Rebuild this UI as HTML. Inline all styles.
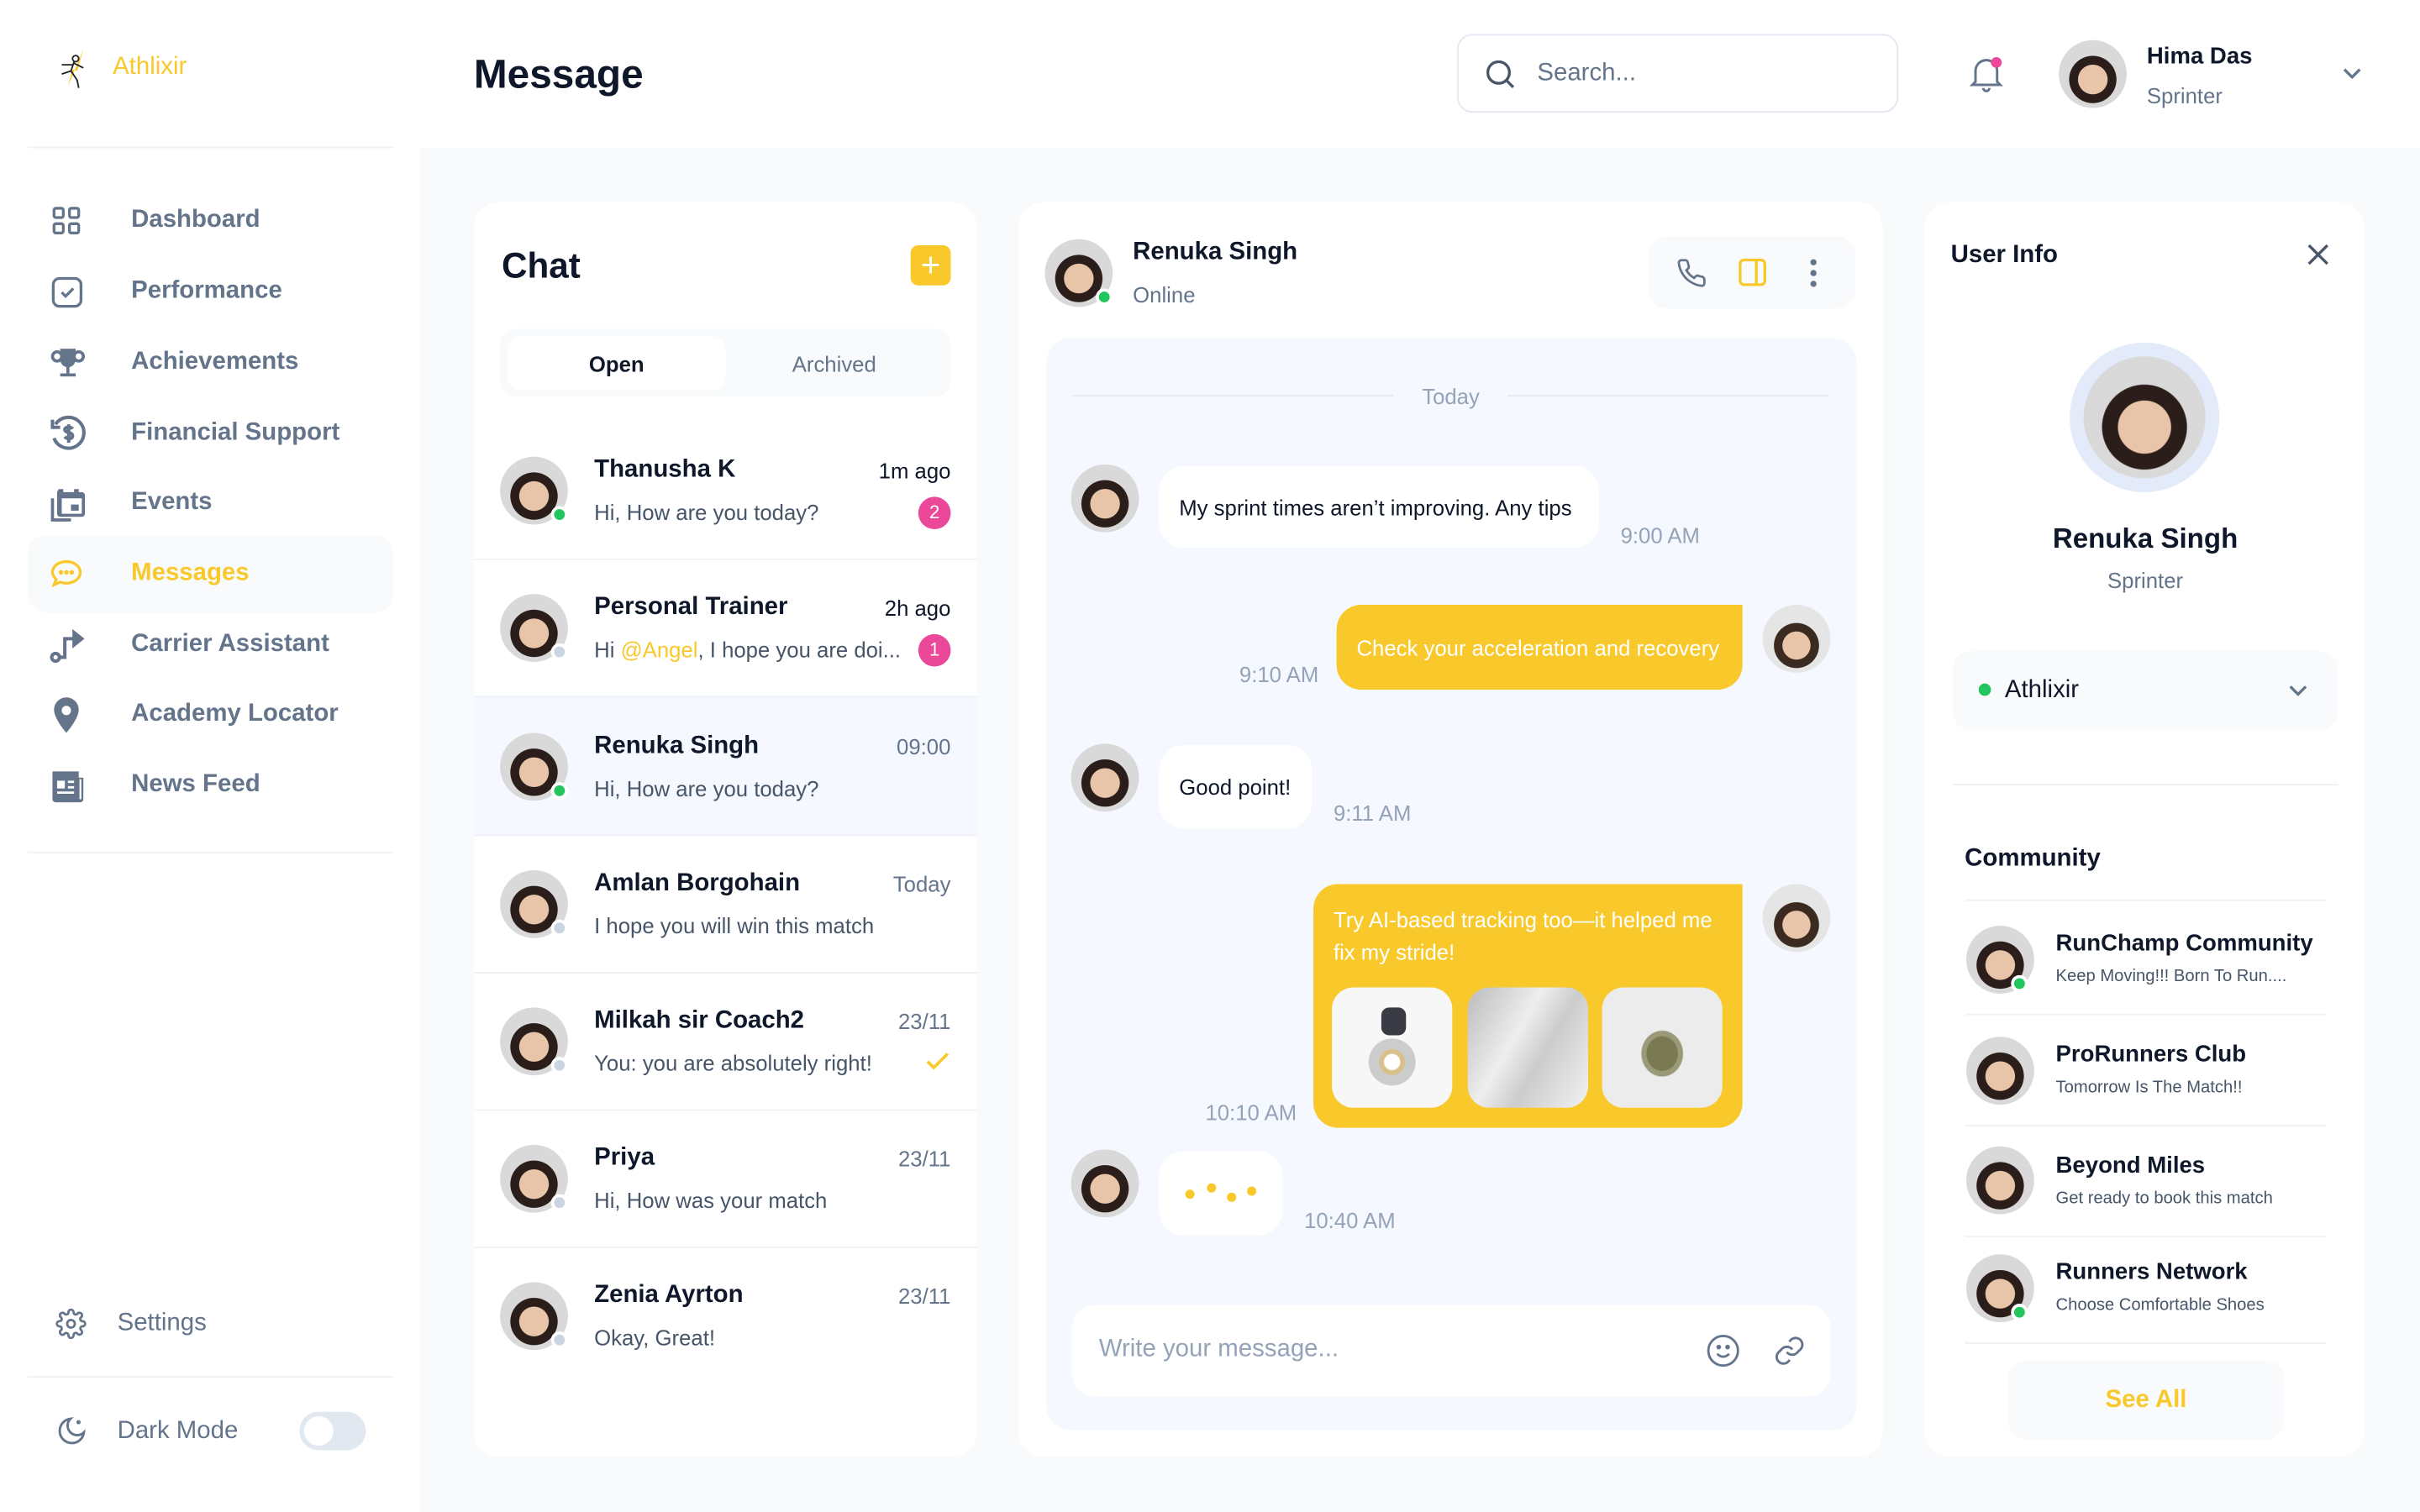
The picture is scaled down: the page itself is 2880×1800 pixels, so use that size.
<!DOCTYPE html>
<html><head><meta charset="utf-8"><style>
*{box-sizing:border-box;margin:0;padding:0}
html,body{width:2880px;height:1800px;overflow:hidden;background:#fff}
#s{position:absolute;left:0;top:0;width:1568px;height:980px;transform:scale(1.836735);transform-origin:0 0;font-family:"Liberation Sans",sans-serif;color:#0F172A;background:#F8FAFC}
.a{position:absolute}
.t{position:absolute;white-space:nowrap;line-height:1}
.card{position:absolute;background:#fff;border-radius:16px}
.av{position:absolute;border-radius:50%;overflow:hidden;background:radial-gradient(circle at 50% 58%,#e8c4a8 0 28%,#2a1d1a 29% 45%,#d9d9d9 46%)}
.on{position:absolute;width:11px;height:11px;border-radius:50%;background:#22C55E;border:2px solid #fff}
.off{position:absolute;width:11px;height:11px;border-radius:50%;background:#CBD5E1;border:2px solid #fff}
.nav{font-size:16px;font-weight:bold;color:#64748B}
.g{color:#64748B}
svg{position:absolute}
.badge{position:absolute;width:21px;height:21px;border-radius:50%;background:#EC4899;color:#fff;font-size:12px;text-align:center;line-height:21px}
.hl{position:absolute;height:1px;background:#EEF2F6}
</style></head><body><div id="s">
<!-- sidebar -->
<div class="a" style="left:0;top:0;width:272px;height:980px;background:#fff"></div>
<div class="a" style="left:272px;top:0;width:1296px;height:96px;background:#fff"></div>
<svg style="left:34px;top:30px" width="30" height="30" viewBox="0 0 30 30"><path d="M20 2 L10 26 L13 15 L16 16 Z" fill="#F9C92B"/><circle cx="15" cy="8" r="2" fill="none" stroke="#222"/><path d="M14 10 L12 16 L6 18 M12 16 L16 22 L17 27 M13 12 L6 12 M14 11 L20 14" stroke="#222" fill="none" stroke-width="1"/></svg>
<div class="t" style="left:73px;top:36px;font-size:16px;color:#F9C92B">Athlixir</div>
<div class="hl" style="left:18px;top:95px;width:237px"></div>
<div class="a" style="left:18px;top:347px;width:237px;height:50px;background:#F8FAFC;border-radius:12px"></div>
<svg style="left:33px;top:133px" width="20" height="20" viewBox="0 0 20 20" fill="none" stroke="#64748B" stroke-width="1.8"><rect x="2" y="2" width="6" height="6" rx="1.2"/><rect x="12" y="2" width="6" height="6" rx="1.2"/><rect x="2" y="12" width="6" height="6" rx="1.2"/><rect x="12" y="12" width="6" height="6" rx="1.2"/></svg>
<div class="t nav" style="left:85px;top:135px">Dashboard</div>
<svg style="left:33px;top:179px" width="21" height="21" viewBox="0 0 21 21" fill="none" stroke="#64748B" stroke-width="1.8"><rect x="1.5" y="1.5" width="18" height="18" rx="4"/><path d="M7 10.5l2.5 2.5 5-5"/></svg>
<div class="t nav" style="left:85px;top:181px">Performance</div>
<svg style="left:33px;top:224px" width="22" height="22" viewBox="0 0 22 22" fill="#64748B"><path d="M6 2h10v7a5 5 0 0 1-10 0z"/><circle cx="4" cy="7" r="3" fill="none" stroke="#64748B" stroke-width="2"/><circle cx="18" cy="7" r="3" fill="none" stroke="#64748B" stroke-width="2"/><rect x="10" y="13" width="2" height="5"/><rect x="6" y="18" width="10" height="2"/></svg>
<div class="t nav" style="left:85px;top:227px">Achievements</div>
<svg style="left:31px;top:268px" width="26" height="26" viewBox="0 0 26 26" fill="none" stroke="#64748B" stroke-width="2.2"><path d="M5 7a10 10 0 1 1-1 9"/><path d="M3 4v5h5"/><path d="M16 10c-1-1.5-5-1.5-5 .5s5 1.5 5 4-4 2-5 .5M13.5 7v12"/></svg>
<div class="t nav" style="left:85px;top:273px">Financial Support</div>
<svg style="left:31px;top:314px" width="26" height="26" viewBox="0 0 26 26" fill="#64748B"><path d="M7 3h3v2h7V3h3v2h2a2 2 0 0 1 2 2v12a2 2 0 0 1-2 2H8a2 2 0 0 1-2-2V5zM9 9v10h13V9z"/><rect x="15" y="13" width="5" height="4"/><path d="M2 9h2v13h11v2H2z"/></svg>
<div class="t nav" style="left:85px;top:318px">Events</div>
<svg style="left:32px;top:361px" width="22" height="22" viewBox="0 0 22 22" fill="none" stroke="#F9C92B" stroke-width="1.8"><path d="M11 3c5 0 9 3 9 7s-4 7-9 7c-1.5 0-3-.3-4-.7L3 18l1.4-3.5C3 13 2 11.6 2 10c0-4 4-7 9-7z"/><circle cx="7.5" cy="10" r=".6" fill="#F9C92B"/><circle cx="11" cy="10" r=".6" fill="#F9C92B"/><circle cx="14.5" cy="10" r=".6" fill="#F9C92B"/></svg>
<div class="t nav" style="left:85px;top:364px;color:#F9C92B">Messages</div>
<svg style="left:31px;top:405px" width="26" height="26" viewBox="0 0 26 26" fill="none" stroke="#64748B" stroke-width="2.2"><circle cx="5" cy="21" r="2.5"/><path d="M7.5 21H11V9h6"/><path d="M17 5l5 4-5 4z" fill="#64748B"/></svg>
<div class="t nav" style="left:85px;top:410px">Carrier Assistant</div>
<svg style="left:33px;top:451px" width="20" height="26" viewBox="0 0 20 26" fill="#64748B"><path d="M10 1a8 8 0 0 0-8 8c0 6 8 15 8 15s8-9 8-15a8 8 0 0 0-8-8zm0 5.5a3 3 0 1 1 0 6 3 3 0 0 1 0-6z"/></svg>
<div class="t nav" style="left:85px;top:455px">Academy Locator</div>
<svg style="left:31px;top:498px" width="26" height="24" viewBox="0 0 26 24" fill="#64748B"><path d="M3 2h17v4h3v14a2 2 0 0 1-2 2H5a2 2 0 0 1-2-2z"/><path d="M6 8h5v5H6z M13 8h4v1.5h-4z M13 11.5h4V13h-4z M6 15h11v1.5H6z" fill="#fff"/><rect x="20.5" y="7" width="1.2" height="13" fill="#fff"/></svg>
<div class="t nav" style="left:85px;top:501px">News Feed</div>
<div class="hl" style="left:18px;top:552px;width:237px"></div>
<svg style="left:36px;top:848px" width="20" height="20" viewBox="0 0 24 24" fill="none" stroke="#64748B" stroke-width="1.8"><circle cx="12" cy="12" r="3"/><path d="M19.4 15a1.7 1.7 0 0 0 .3 1.8l.1.1a2 2 0 1 1-2.8 2.8l-.1-.1a1.7 1.7 0 0 0-2.9 1.2V21a2 2 0 1 1-4 0v-.1a1.7 1.7 0 0 0-2.9-1.2l-.1.1a2 2 0 1 1-2.8-2.8l.1-.1A1.7 1.7 0 0 0 3 14H3a2 2 0 1 1 0-4h.1a1.7 1.7 0 0 0 1.2-2.9l-.1-.1a2 2 0 1 1 2.8-2.8l.1.1A1.7 1.7 0 0 0 10 3V3a2 2 0 1 1 4 0v.1a1.7 1.7 0 0 0 2.9 1.2l.1-.1a2 2 0 1 1 2.8 2.8l-.1.1A1.7 1.7 0 0 0 21 10h0a2 2 0 1 1 0 4h-.1a1.7 1.7 0 0 0-1.5 1z"/></svg>
<div class="t nav" style="left:76px;top:850px;font-weight:normal">Settings</div>
<div class="hl" style="left:18px;top:892px;width:237px"></div>
<svg style="left:36px;top:917px" width="21" height="21" viewBox="0 0 24 24" fill="none" stroke="#64748B" stroke-width="1.8"><path d="M21 13A9 9 0 1 1 11 3a7 7 0 0 0 10 10z"/><path d="M17 4v3M15.5 5.5h3"/></svg>
<div class="t nav" style="left:76px;top:920px;font-weight:normal">Dark Mode</div>
<div class="a" style="left:194px;top:915px;width:43px;height:25px;border-radius:13px;background:#E2E8F0"></div>
<div class="a" style="left:197px;top:918px;width:19px;height:19px;border-radius:50%;background:#fff"></div>
<!-- header -->
<div class="t" style="left:307px;top:35px;font-size:26px;font-weight:bold">Message</div>
<div class="a" style="left:944px;top:22px;width:286px;height:51px;border:1px solid #E2E8F0;border-radius:10px"></div>
<svg style="left:962px;top:38px" width="20" height="20" viewBox="0 0 20 20" fill="none" stroke="#475569" stroke-width="1.8"><circle cx="9" cy="9" r="7"/><path d="M14 14l4.5 4.5"/></svg>
<div class="t g" style="left:996px;top:40px;font-size:16px">Search...</div>
<svg style="left:1276px;top:36px" width="22" height="24" viewBox="0 0 22 24" fill="none" stroke="#64748B" stroke-width="1.6"><path d="M4 17V10a7 7 0 0 1 14 0v7l2 2H2z"/><path d="M9 21a2 2 0 0 0 4 0"/></svg>
<div class="a" style="left:1290px;top:37px;width:7px;height:7px;border-radius:50%;background:#EC4899"></div>
<div class="av" style="left:1334px;top:26px;width:44px;height:44px"></div>
<div class="t" style="left:1391px;top:29px;font-size:15px;font-weight:bold">Hima Das</div>
<div class="t g" style="left:1391px;top:55px;font-size:14px">Sprinter</div>
<svg style="left:1517px;top:43px" width="14" height="10" viewBox="0 0 14 10" fill="none" stroke="#64748B" stroke-width="1.8"><path d="M2 2l5 5 5-5"/></svg>
<!-- chat list -->
<div class="card" style="left:307px;top:131px;width:326px;height:813px"></div>
<div class="t" style="left:325px;top:161px;font-size:23px;font-weight:bold">Chat</div>
<div class="a" style="left:590px;top:159px;width:26px;height:26px;background:#F9C92B;border-radius:5px;color:#fff;font-size:22px;text-align:center;line-height:25px">+</div>
<div class="a" style="left:324px;top:213px;width:292px;height:44px;background:#F8FAFC;border-radius:10px"></div>
<div class="a" style="left:329px;top:218px;width:141px;height:35px;background:#fff;border-radius:8px"></div>
<div class="t" style="left:329px;top:229px;width:141px;text-align:center;font-size:14px;font-weight:bold">Open</div>
<div class="t g" style="left:470px;top:229px;width:141px;text-align:center;font-size:14px">Archived</div>
<div class="a" style="left:307px;top:452px;width:326px;height:89px;background:#F5F8FE"></div>
<div class="hl" style="left:307px;top:362px;width:326px"></div><div class="hl" style="left:307px;top:451px;width:326px"></div><div class="hl" style="left:307px;top:541px;width:326px"></div><div class="hl" style="left:307px;top:630px;width:326px"></div><div class="hl" style="left:307px;top:719px;width:326px"></div><div class="hl" style="left:307px;top:808px;width:326px"></div>

<div class="av" style="left:324px;top:296px;width:44px;height:44px"></div><div class="on" style="left:357px;top:328px"></div>
<div class="t" style="left:385px;top:297px;font-size:16px;font-weight:bold">Thanusha K</div><div class="t" style="left:500px;top:298px;width:116px;text-align:right;font-size:14px">1m ago</div>
<div class="t" style="left:385px;top:325px;font-size:14px;color:#475569">Hi, How are you today?</div><div class="badge" style="left:595px;top:322px">2</div>

<div class="av" style="left:324px;top:385px;width:44px;height:44px"></div><div class="off" style="left:357px;top:417px"></div>
<div class="t" style="left:385px;top:386px;font-size:16px;font-weight:bold">Personal Trainer</div><div class="t" style="left:500px;top:387px;width:116px;text-align:right;font-size:14px">2h ago</div>
<div class="t" style="left:385px;top:414px;font-size:14px;color:#475569">Hi <span style="color:#F9C92B">@Angel</span>, I hope you are doi...</div><div class="badge" style="left:595px;top:411px">1</div>

<div class="av" style="left:324px;top:475px;width:44px;height:44px"></div><div class="on" style="left:357px;top:507px"></div>
<div class="t" style="left:385px;top:476px;font-size:16px;font-weight:bold">Renuka Singh</div><div class="t g" style="left:500px;top:477px;width:116px;text-align:right;font-size:14px">09:00</div>
<div class="t" style="left:385px;top:504px;font-size:14px;color:#475569">Hi, How are you today?</div>

<div class="av" style="left:324px;top:564px;width:44px;height:44px"></div><div class="off" style="left:357px;top:596px"></div>
<div class="t" style="left:385px;top:565px;font-size:16px;font-weight:bold">Amlan Borgohain</div><div class="t g" style="left:500px;top:566px;width:116px;text-align:right;font-size:14px">Today</div>
<div class="t" style="left:385px;top:593px;font-size:14px;color:#475569">I hope you will win this match</div>

<div class="av" style="left:324px;top:653px;width:44px;height:44px"></div><div class="off" style="left:357px;top:685px"></div>
<div class="t" style="left:385px;top:654px;font-size:16px;font-weight:bold">Milkah sir Coach2</div><div class="t g" style="left:500px;top:655px;width:116px;text-align:right;font-size:14px">23/11</div>
<div class="t" style="left:385px;top:682px;font-size:14px;color:#475569">You: you are absolutely right!</div>
<svg style="left:600px;top:682px" width="15" height="12" viewBox="0 0 15 12" fill="none" stroke="#F9C92B" stroke-width="2"><path d="M1 6l4 4 9-9"/></svg>

<div class="av" style="left:324px;top:742px;width:44px;height:44px"></div><div class="off" style="left:357px;top:774px"></div>
<div class="t" style="left:385px;top:743px;font-size:16px;font-weight:bold">Priya</div><div class="t g" style="left:500px;top:744px;width:116px;text-align:right;font-size:14px">23/11</div>
<div class="t" style="left:385px;top:771px;font-size:14px;color:#475569">Hi, How was your match</div>

<div class="av" style="left:324px;top:831px;width:44px;height:44px"></div><div class="off" style="left:357px;top:863px"></div>
<div class="t" style="left:385px;top:832px;font-size:16px;font-weight:bold">Zenia Ayrton</div><div class="t g" style="left:500px;top:833px;width:116px;text-align:right;font-size:14px">23/11</div>
<div class="t" style="left:385px;top:860px;font-size:14px;color:#475569">Okay, Great!</div>

<!-- conversation -->
<div class="card" style="left:660px;top:131px;width:560px;height:813px"></div>
<div class="av" style="left:677px;top:155px;width:44px;height:44px"></div><div class="on" style="left:710px;top:187px"></div>
<div class="t" style="left:734px;top:156px;font-size:16px;font-weight:bold">Renuka Singh</div>
<div class="t g" style="left:734px;top:184px;font-size:14px">Online</div>
<div class="a" style="left:1068px;top:153px;width:134px;height:47px;background:#F8FAFC;border-radius:12px"></div>
<svg style="left:1086px;top:167px" width="20" height="20" viewBox="0 0 24 24" fill="none" stroke="#64748B" stroke-width="1.8"><path d="M22 16.9v3a2 2 0 0 1-2.2 2 19.8 19.8 0 0 1-8.6-3.1 19.5 19.5 0 0 1-6-6A19.8 19.8 0 0 1 2.1 4.2 2 2 0 0 1 4.1 2h3a2 2 0 0 1 2 1.7c.1.9.4 1.8.7 2.7a2 2 0 0 1-.5 2.1L8 9.8a16 16 0 0 0 6 6l1.3-1.3a2 2 0 0 1 2.1-.4c.9.3 1.8.6 2.7.7a2 2 0 0 1 1.7 2z"/></svg>
<svg style="left:1126px;top:167px" width="19" height="19" viewBox="0 0 19 19" fill="none" stroke="#F9C92B" stroke-width="1.8"><rect x="1.5" y="1.5" width="16" height="16" rx="2.5"/><path d="M12 1.5v16"/></svg>
<svg style="left:1171px;top:167px" width="8" height="20" viewBox="0 0 8 20" fill="#64748B"><circle cx="4" cy="3" r="2"/><circle cx="4" cy="10" r="2"/><circle cx="4" cy="17" r="2"/></svg>
<div class="a" style="left:678px;top:219px;width:525px;height:708px;background:#F5F8FE;border-radius:16px"></div>
<div class="a" style="left:695px;top:256px;width:208px;height:1px;background:#E2E8F0"></div>
<div class="a" style="left:977px;top:256px;width:208px;height:1px;background:#E2E8F0"></div>
<div class="t" style="left:900px;top:250px;width:80px;text-align:center;font-size:14px;color:#94A3B8">Today</div>

<div class="av" style="left:694px;top:301px;width:44px;height:44px"></div>
<div class="a" style="left:751px;top:302px;width:285px;height:53px;background:#fff;border-radius:16px"></div>
<div class="t" style="left:764px;top:322px;font-size:14px">My sprint times aren’t improving. Any tips</div>
<div class="t" style="left:1050px;top:340px;font-size:14px;color:#94A3B8">9:00 AM</div>

<div class="a" style="left:866px;top:392px;width:263px;height:55px;background:#F9C92B;border-radius:16px 0 16px 16px"></div>
<div class="t" style="left:879px;top:413px;font-size:14px;color:#fff">Check your acceleration and recovery</div>
<div class="t" style="left:803px;top:430px;font-size:14px;color:#94A3B8">9:10 AM</div>
<div class="av" style="left:1142px;top:392px;width:44px;height:44px;background:radial-gradient(circle at 50% 60%,#e8c4a8 0 26%,#3a2a20 27% 42%,#e5e5e5 43%)"></div>

<div class="av" style="left:694px;top:482px;width:44px;height:44px"></div>
<div class="a" style="left:751px;top:483px;width:99px;height:54px;background:#fff;border-radius:16px"></div>
<div class="t" style="left:764px;top:503px;font-size:14px">Good point!</div>
<div class="t" style="left:864px;top:520px;font-size:14px;color:#94A3B8">9:11 AM</div>

<div class="a" style="left:851px;top:573px;width:278px;height:158px;background:#F9C92B;border-radius:16px 0 16px 16px"></div>
<div class="t" style="left:864px;top:589px;font-size:14px;color:#fff;line-height:21px;top:586px;white-space:normal;width:255px">Try AI-based tracking too—it helped me fix my stride!</div>
<div class="a" style="left:863px;top:640px;width:78px;height:78px;border-radius:14px;background:radial-gradient(circle at 50% 62%,#fff 0 8%,#d9c08a 9% 13%,#ccc 14% 24%,#f7f7f7 25%)"></div>
<div class="a" style="left:895px;top:653px;width:16px;height:18px;border-radius:5px;background:#3a3a44"></div>
<div class="a" style="left:951px;top:640px;width:78px;height:78px;border-radius:14px;background:linear-gradient(120deg,#bbb,#eee 40%,#ccc 60%,#f2f2f2)"></div>
<div class="a" style="left:1038px;top:640px;width:78px;height:78px;border-radius:14px;background:radial-gradient(ellipse at 50% 55%,#7a7a52 0 18%,#9a9a78 19% 24%,#ececec 25%)"></div>
<div class="t" style="left:781px;top:714px;font-size:14px;color:#94A3B8">10:10 AM</div>
<div class="av" style="left:1142px;top:573px;width:44px;height:44px;background:radial-gradient(circle at 50% 60%,#e8c4a8 0 26%,#3a2a20 27% 42%,#e5e5e5 43%)"></div>

<div class="av" style="left:694px;top:745px;width:44px;height:44px"></div>
<div class="a" style="left:751px;top:746px;width:80px;height:55px;background:#fff;border-radius:16px"></div>
<div class="a" style="left:768px;top:771px;width:6px;height:6px;border-radius:50%;background:#F9C92B"></div>
<div class="a" style="left:782px;top:767px;width:6px;height:6px;border-radius:50%;background:#F9C92B"></div>
<div class="a" style="left:795px;top:773px;width:6px;height:6px;border-radius:50%;background:#F9C92B"></div>
<div class="a" style="left:808px;top:769px;width:6px;height:6px;border-radius:50%;background:#F9C92B"></div>
<div class="t" style="left:845px;top:784px;font-size:14px;color:#94A3B8">10:40 AM</div>

<div class="a" style="left:695px;top:846px;width:491px;height:59px;background:#fff;border-radius:14px"></div>
<div class="t" style="left:712px;top:867px;font-size:16px;color:#94A3B8">Write your message...</div>
<svg style="left:1105px;top:864px" width="23" height="23" viewBox="0 0 24 24" fill="none" stroke="#64748B" stroke-width="1.6"><circle cx="12" cy="12" r="10"/><path d="M8 14s1.5 2 4 2 4-2 4-2"/><circle cx="9" cy="9.5" r=".8" fill="#64748B"/><circle cx="15" cy="9.5" r=".8" fill="#64748B"/></svg>
<svg style="left:1149px;top:865px" width="21" height="21" viewBox="0 0 24 24" fill="none" stroke="#64748B" stroke-width="1.8"><path d="M10 13a5 5 0 0 0 7.5.5l3-3a5 5 0 0 0-7-7l-1.7 1.7"/><path d="M14 11a5 5 0 0 0-7.5-.5l-3 3a5 5 0 0 0 7 7l1.7-1.7"/></svg>

<!-- user info -->
<div class="card" style="left:1247px;top:131px;width:285px;height:813px"></div>
<div class="t" style="left:1264px;top:158px;font-size:16px;font-weight:bold">User Info</div>
<svg style="left:1495px;top:158px" width="14" height="14" viewBox="0 0 14 14" stroke="#475569" stroke-width="1.8"><path d="M1 1l12 12M13 1L1 13"/></svg>
<div class="a" style="left:1341px;top:222px;width:97px;height:97px;border-radius:50%;background:#E3EBFA"></div>
<div class="av" style="left:1350px;top:231px;width:79px;height:79px"></div>
<div class="t" style="left:1290px;top:340px;width:200px;text-align:center;font-size:18px;font-weight:bold">Renuka Singh</div>
<div class="t g" style="left:1290px;top:369px;width:200px;text-align:center;font-size:14px">Sprinter</div>
<div class="a" style="left:1265px;top:422px;width:250px;height:51px;background:#F8FAFC;border-radius:12px"></div>
<div class="a" style="left:1282px;top:443px;width:8px;height:8px;border-radius:50%;background:#22C55E"></div>
<div class="t" style="left:1299px;top:440px;font-size:16px">Athlixir</div>
<svg style="left:1482px;top:443px" width="14" height="10" viewBox="0 0 14 10" fill="none" stroke="#64748B" stroke-width="1.8"><path d="M2 2l5 5 5-5"/></svg>
<div class="hl" style="left:1265px;top:508px;width:250px"></div>
<div class="t" style="left:1273px;top:549px;font-size:16px;font-weight:bold">Community</div>
<div class="hl" style="left:1273px;top:583px;width:234px"></div>
<div class="av" style="left:1274px;top:600px;width:44px;height:44px"></div><div class="on" style="left:1303px;top:632px"></div>
<div class="t" style="left:1332px;top:604px;font-size:15px;font-weight:bold">RunChamp Community</div>
<div class="t" style="left:1332px;top:628px;font-size:11px;color:#475569">Keep Moving!!! Born To Run....</div>
<div class="hl" style="left:1273px;top:657px;width:234px"></div>
<div class="av" style="left:1274px;top:672px;width:44px;height:44px"></div>
<div class="t" style="left:1332px;top:676px;font-size:15px;font-weight:bold">ProRunners Club</div>
<div class="t" style="left:1332px;top:700px;font-size:11px;color:#475569">Tomorrow Is The Match!!</div>
<div class="hl" style="left:1273px;top:729px;width:234px"></div>
<div class="av" style="left:1274px;top:743px;width:44px;height:44px"></div>
<div class="t" style="left:1332px;top:748px;font-size:15px;font-weight:bold">Beyond Miles</div>
<div class="t" style="left:1332px;top:772px;font-size:11px;color:#475569">Get ready to book this match</div>
<div class="hl" style="left:1273px;top:801px;width:234px"></div>
<div class="av" style="left:1274px;top:813px;width:44px;height:44px"></div><div class="on" style="left:1303px;top:845px"></div>
<div class="t" style="left:1332px;top:817px;font-size:15px;font-weight:bold">Runners Network</div>
<div class="t" style="left:1332px;top:841px;font-size:11px;color:#475569">Choose Comfortable Shoes</div>
<div class="hl" style="left:1273px;top:870px;width:234px"></div>
<div class="a" style="left:1301px;top:882px;width:179px;height:51px;background:#F8FAFC;border-radius:12px"></div>
<div class="t" style="left:1301px;top:900px;width:179px;text-align:center;font-size:16px;font-weight:bold;color:#F9C92B">See All</div>
</div></body></html>
